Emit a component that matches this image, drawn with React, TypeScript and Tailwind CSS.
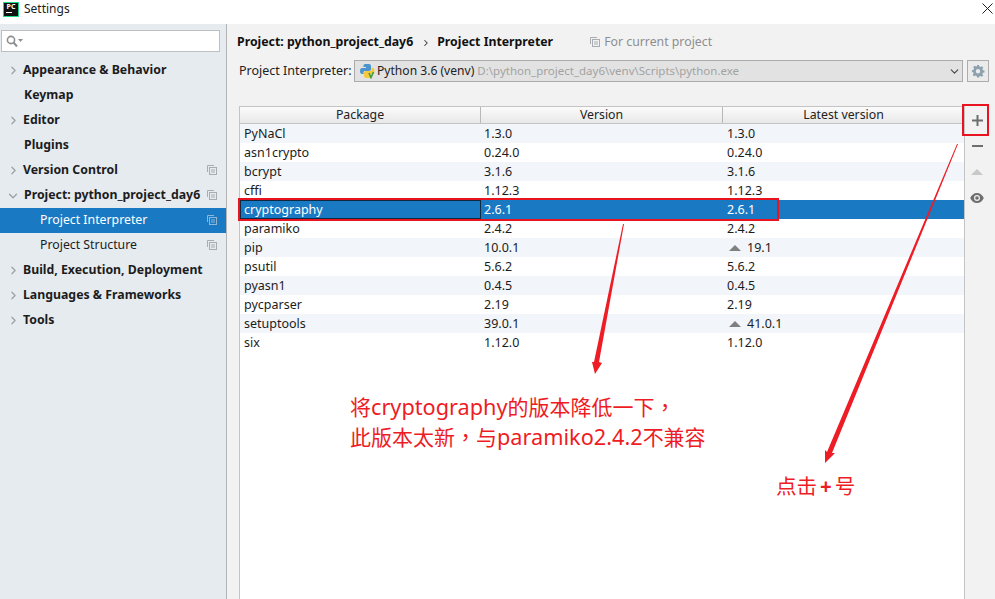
import { ChevronRight, ChevronDown } from "lucide-react";

const font = { sans: "font-['Noto_Sans','Noto_Sans_CJK_SC',sans-serif]" };

function CopyIcon({ light }: { light?: boolean }) {
  const c = light ? "#8fb6d6" : "#a8adb2";
  return (
    <svg width="10" height="10" viewBox="0 0 10 10" fill="none" stroke={c} strokeWidth="1">
      <path d="M.5 7V.5H7" />
      <rect x="2.5" y="2.5" width="7" height="7" />
      <path d="M4 5h4M4 7h4" />
    </svg>
  );
}

function NavItem({
  label,
  arrow,
  bold = true,
  child,
  selected,
  copy,
  x,
}: {
  label: string;
  arrow?: "right" | "down";
  bold?: boolean;
  child?: boolean;
  selected?: boolean;
  copy?: boolean;
  x?: boolean;
}) {
  return (
    <div className={`h-[25px] flex items-center relative ${selected ? "bg-[#1a79c3] text-white" : "text-[#1c1c1c]"}`}>
      <div className="w-[23px] flex justify-center shrink-0 pl-[1px]">
        {arrow === "right" && <ChevronRight size={13} strokeWidth={2.2} className="text-[#9aa0a5] ml-[2px]" />}
        {arrow === "down" && <ChevronDown size={14} strokeWidth={2.2} className="text-[#9aa0a5] ml-[2px]" />}
      </div>
      <span
        className={`text-[12.3px] leading-none whitespace-nowrap ${bold ? "font-bold" : ""} ${child ? "pl-[17px]" : x ? "pl-[1px]" : ""}`}
      >
        {label}
      </span>
      {copy && (
        <span className="absolute left-[207px] top-[7px] flex">
          <CopyIcon light={selected} />
        </span>
      )}
    </div>
  );
}

const rows: [string, string, string, boolean?][] = [
  ["PyNaCl", "1.3.0", "1.3.0"],
  ["asn1crypto", "0.24.0", "0.24.0"],
  ["bcrypt", "3.1.6", "3.1.6"],
  ["cffi", "1.12.3", "1.12.3"],
  ["cryptography", "2.6.1", "2.6.1"],
  ["paramiko", "2.4.2", "2.4.2"],
  ["pip", "10.0.1", "19.1", true],
  ["psutil", "5.6.2", "5.6.2"],
  ["pyasn1", "0.4.5", "0.4.5"],
  ["pycparser", "2.19", "2.19"],
  ["setuptools", "39.0.1", "41.0.1", true],
  ["six", "1.12.0", "1.12.0"],
];

function PythonIcon() {
  return (
    <svg width="16" height="16" viewBox="0 0 16 16">
      <path d="M7 1h3c1 0 2 .8 2 2v3c0 1-1 2-2 2H6c-1 0-1.500.6-1.500 1.600V11H3c-1.300 0-2-1.200-2-3s.8-3 2-3h4V4H4.500V2.500C4.500 1.500 5.500 1 7 1z" fill="#4d93cc" />
      <path d="M12.500 5H14c1 0 1.500 1.200 1.500 3s-.6 3-1.500 3h-4v1h2.500v1.500c0 1-1 1.500-3 1.500H7c-1 0-2-.8-2-2v-3c0-1 1-2 2-2h4c1 0 1.500-.6 1.500-1.600z" fill="#f5c93c" />
      <path d="M10 10l2 4.500L14.500 9" fill="none" stroke="#3f9b3a" strokeWidth="1.600" />
    </svg>
  );
}

export default function App() {
  return (
    <div className={`w-[995px] h-[599px] overflow-hidden bg-white relative flex flex-col ${font.sans}`}>
      {/* title bar */}
      <div className="h-[24px] shrink-0 bg-white flex items-center relative pb-[6px]">
        <div className="ml-[3px] w-[16px] h-[15px] bg-[#111] border border-[#21d789] flex flex-col items-center">
          <span className="text-[7px] leading-[8px] font-bold text-white">PC</span>
          <span className="w-[6px] h-[1px] bg-white self-start ml-[2px] mt-[1px]" />
        </div>
        <span className="ml-[5px] text-[12px] text-[#222] leading-none">Settings</span>
        <svg className="absolute left-[982px] top-[3px]" width="11" height="11" viewBox="0 0 11 11" stroke="#222" strokeWidth="1">
          <path d="M.5.5l10 10M10.500.5l-10 10" />
        </svg>
      </div>

      <div className="flex flex-1 min-h-0">
        {/* sidebar */}
        <div className="w-[227px] shrink-0 bg-[#e6ebf0] border-r border-[#b4b4b4]">
          <div className="mx-[1px] mt-[6px] h-[22px] w-[219px] bg-white border border-[#bdc0c2] flex items-center pl-[4px] gap-[1px]">
            <svg width="18" height="12" viewBox="0 0 18 12" fill="none">
              <circle cx="5" cy="5" r="3.600" stroke="#8c8f92" strokeWidth="1.600" />
              <path d="M7.500 7.500l3.500 4" stroke="#8c8f92" strokeWidth="2" />
              <path d="M12 4h5l-2.500 3z" fill="#8c8f92" />
            </svg>
          </div>
          <div className="mt-[6px]">
            <NavItem label="Appearance & Behavior" arrow="right" />
            <NavItem label="Keymap" x />
            <NavItem label="Editor" arrow="right" />
            <NavItem label="Plugins" x />
            <NavItem label="Version Control" arrow="right" copy />
            <NavItem label="Project: python_project_day6" arrow="down" copy x />
            <NavItem label="Project Interpreter" bold={false} child selected copy />
            <NavItem label="Project Structure" bold={false} child copy />
            <NavItem label="Build, Execution, Deployment" arrow="right" />
            <NavItem label="Languages & Frameworks" arrow="right" />
            <NavItem label="Tools" arrow="right" />
          </div>
        </div>

        {/* content */}
        <div className="flex-1 min-w-0 bg-[#f2f2f2] flex flex-col">
          <div className="h-[34px] shrink-0 flex items-center pl-[10px] pt-[3px] text-[12.3px] leading-none text-[#111] whitespace-nowrap">
            <span className="font-bold">Project: python_project_day6</span>
            <ChevronRight size={10} strokeWidth={2.500} className="ml-[8px] mr-[6px] text-[#333]" />
            <span className="font-bold">Project Interpreter</span>
            <span className="ml-[37px] flex items-center gap-[4px] font-normal text-[#8e8e8e]">
              <CopyIcon />
              For current project
            </span>
          </div>

          <div className="h-[22px] shrink-0 flex items-center pl-[12px] mt-[2px] text-[12.5px] leading-none whitespace-nowrap">
            <span className="text-[#222] w-[115px]">Project Interpreter:</span>
            <div className="w-[609px] h-[22px] bg-[#e2e2e2] border border-[#acacac] flex items-center pl-[4px] relative overflow-hidden">
              <PythonIcon />
              <span className="ml-[2px] text-[#222] text-[12.1px]">Python 3.6 (venv)</span>
              <span className="ml-[3px] text-[#a2a2a2] text-[11.5px]">D:\python_project_day6\venv\Scripts\python.exe</span>
              <ChevronDown size={13} className="absolute right-[1px] top-[4px] text-[#444]" />
            </div>
            <div className="ml-[4px] w-[22px] h-[22px] bg-[#ebebeb] border border-[#acacac] flex items-center justify-center">
              <svg width="14" height="14" viewBox="0 0 14 14">
                <path
                  fillRule="evenodd"
                  d="M6 1h2l.3 1.600 1.200.5L10.900 2.200l1.400 1.400-.9 1.400.5 1.200 1.600.3v2l-1.600.3-.5 1.200.9 1.400-1.400 1.400-1.400-.9-1.200.5L8 13.500H6l-.3-1.600-1.200-.5-1.400.9-1.400-1.400.9-1.400-.5-1.200L1 8V6l1.600-.3.5-1.200-.9-1.400 1.400-1.400 1.400.9 1.200-.5zM7 5a2.200 2.200 0 1 0 0 4.400A2.200 2.200 0 0 0 7 5z"
                  fill="#8da0ad"
                />
              </svg>
            </div>
          </div>

          <div className="flex flex-1 min-h-0 mt-[24px] pl-[12px]">
            {/* table */}
            <div className="w-[725px] shrink-0 bg-white border-l border-[#c4c4c4] self-stretch">
              <div className="h-[18px] flex bg-gradient-to-b from-[#fbfbfb] to-[#e8e8e8] border-t border-b border-[#c4c4c4] text-[12.3px] leading-none text-[#222]">
                {["Package", "Version", "Latest version"].map((h, i) => (
                  <div
                    key={h}
                    className={`flex items-center justify-center h-full pt-[1px] ${i === 0 ? "w-[241px] border-r border-[#b8b8b8]" : i === 1 ? "w-[242px] border-r border-[#b8b8b8]" : "w-[241px]"}`}
                  >
                    {h}
                  </div>
                ))}
              </div>
              {rows.map(([pkg, ver, latest, up], i) => {
                const sel = pkg === "cryptography";
                return (
                  <div
                    key={pkg}
                    className={`h-[19px] flex items-center text-[12.5px] leading-none ${sel ? "bg-[#1a79c3] text-white" : i % 2 === 0 ? "bg-[#f2f5f9] text-[#1c1c1c]" : "bg-white text-[#1c1c1c]"}`}
                  >
                    <div className={`w-[241px] h-full flex items-center pt-[1px] ${sel ? "border border-[#0e2a40] pl-[3px]" : "pl-[4px]"}`}>{pkg}</div>
                    <div className="w-[242px] pl-[3px] pt-[1px]">{ver}</div>
                    <div className="pl-[4px] pt-[1px] flex items-center">
                      {up && <span className="w-0 h-0 mr-[6px] ml-[2px] border-l-[6px] border-r-[6px] border-b-[6px] border-l-transparent border-r-transparent border-b-[#808080]" />}
                      {latest}
                    </div>
                  </div>
                );
              })}
            </div>

            {/* toolbar */}
            <div className="flex-1 border-l border-[#c4c4c4] flex flex-col items-center pt-[1px] pr-[6px]">
              <div className="h-[26px] flex items-center">
                <svg width="11" height="11" viewBox="0 0 11 11" fill="#6e6e6e">
                  <path d="M4.500 0h2v4.500H11v2H6.500V11h-2V6.500H0v-2h4.500z" />
                </svg>
              </div>
              <div className="h-[26px] flex items-center">
                <svg width="11" height="2" viewBox="0 0 11 2" fill="#6e6e6e">
                  <path d="M0 0h11v2H0z" />
                </svg>
              </div>
              <div className="h-[26px] flex items-center">
                <svg width="12" height="6" viewBox="0 0 12 6" fill="#c8c8c8">
                  <path d="M6 0l6 6H0z" />
                </svg>
              </div>
              <div className="h-[26px] flex items-center">
                <svg width="14" height="10" viewBox="0 0 14 10">
                  <path fillRule="evenodd" d="M7 0c3 0 5.500 2 6.800 5C12.500 8 10 10 7 10S1.500 8 .2 5C1.500 2 4 0 7 0zM7 2a3 3 0 1 0 0 6 3 3 0 0 0 0-6z" fill="#6e6e6e" />
                  <circle cx="7" cy="5" r="1.800" fill="#6e6e6e" />
                </svg>
              </div>
            </div>
          </div>
        </div>
      </div>

      {/* red annotations laid over the screenshot */}
      <div className="absolute left-[238px] top-[198px] w-[541px] h-[23px] border-2 border-[#e8141f]" />
      <div className="absolute left-[962px] top-[104px] w-[27px] h-[32px] border-2 border-[#e8141f]" />
      <svg className="absolute left-0 top-0 pointer-events-none" width="995" height="599" viewBox="0 0 995 599">
        <path d="M623 224L624 224L599 362L602 363L595 374L592 362L594 362z" fill="#ee1c25" />
        <path d="M957 144L958 144L832 453L835 453L825 463L825 450L827 452z" fill="#ee1c25" />
      </svg>
      <div className="absolute left-[350px] top-[392px] text-[21px] leading-[29px] text-[#ee1c25] whitespace-nowrap">
        <div>
          将<span className="text-[21.7px]">cryptography</span>的版本降低一下<span className="font-['Noto_Sans_CJK_TC',sans-serif]">，</span>
        </div>
        <div>
          此版本太新<span className="font-['Noto_Sans_CJK_TC',sans-serif]">，</span>与<span className="text-[21.7px]">paramiko2.4.2</span>不兼容
        </div>
      </div>
      <div className="absolute left-[776px] top-[472px] text-[20.5px] leading-[28px] text-[#ee1c25] whitespace-nowrap">
        点击<span className="font-bold px-[3px]">+</span>号
      </div>
    </div>
  );
}
